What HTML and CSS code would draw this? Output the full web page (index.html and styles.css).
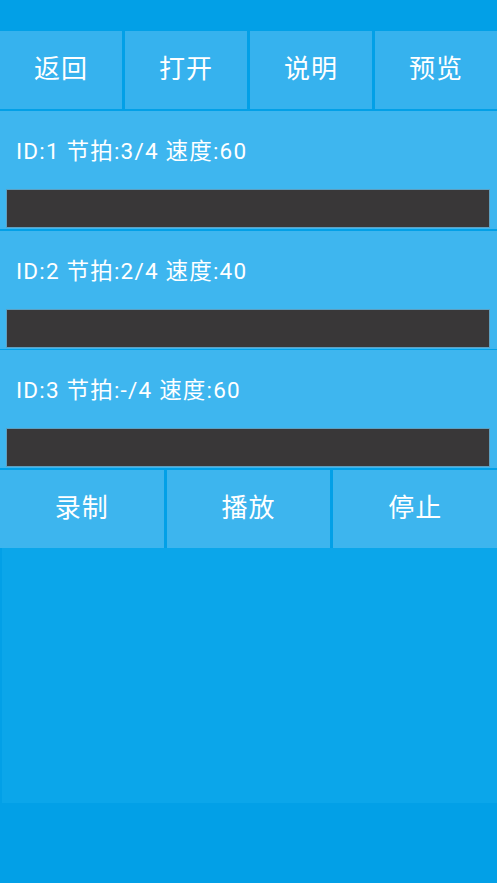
FILE: index.html
```html
<!DOCTYPE html>
<html lang="zh">
<head>
<meta charset="utf-8">
<title>节拍器</title>
<link rel="stylesheet" href="styles.css">
</head>
<body>
<div class="app">
  <div class="statusbar"></div>
  <div class="toolbar">
    <button class="btn">返回</button>
    <button class="btn">打开</button>
    <button class="btn">说明</button>
    <button class="btn">预览</button>
  </div>
  <div class="list">
    <div class="item">
      <div class="item-text">ID:1 节拍:3/4 速度:60</div>
      <div class="item-bar"></div>
    </div>
    <div class="item">
      <div class="item-text">ID:2 节拍:2/4 速度:40</div>
      <div class="item-bar"></div>
    </div>
    <div class="item">
      <div class="item-text">ID:3 节拍:-/4 速度:60</div>
      <div class="item-bar"></div>
    </div>
  </div>
  <div class="controls">
    <button class="btn btn-ctrl">录制</button>
    <button class="btn btn-ctrl">播放</button>
    <button class="btn btn-ctrl">停止</button>
  </div>
  <div class="panel"></div>
</div>
</body>
</html>
```
FILE: styles.css
```css
html, body {
  margin: 0;
  padding: 0;
  background: #02a0e7;
}
.app {
  width: 497px;
  height: 883px;
  display: flex;
  flex-direction: column;
  font-family: Roboto, "Noto Sans CJK SC", sans-serif;
  color: #ffffff;
  overflow: hidden;
}
.statusbar {
  height: 31px;
  flex: none;
}
.toolbar {
  display: flex;
  gap: 3px;
  height: 78px;
  flex: none;
}
.btn {
  flex: 1;
  border: none;
  margin: 0;
  padding: 0 0 7px 0;
  background: #36b2ee;
  color: #ffffff;
  font-family: "Noto Sans CJK SC", sans-serif;
  font-size: 26px;
  letter-spacing: 1px;
}
.list {
  display: flex;
  flex-direction: column;
  gap: 1.5px;
  margin-top: 2px;
}
.item {
  height: 118px;
  background: #3eb6ef;
  display: flex;
  flex-direction: column;
}
.item-text {
  height: 78px;
  line-height: 80px;
  padding-left: 16px;
  font-size: 22.5px;
  letter-spacing: 1.2px;
  font-family: Roboto, "Noto Sans CJK SC", sans-serif;
}
.item-bar {
  margin-left: 6px;
  margin-right: 7px;
  height: 37px;
  background: #393738;
  border: 1px solid #5d9fc0;
}
.controls {
  display: flex;
  gap: 3px;
  height: 78px;
  margin-top: 2px;
  flex: none;
}
.btn-ctrl {
  background: #3db5ee;
}
.panel {
  height: 255px;
  margin-left: 2px;
  background: #0ba6ea;
  flex: none;
}
```
